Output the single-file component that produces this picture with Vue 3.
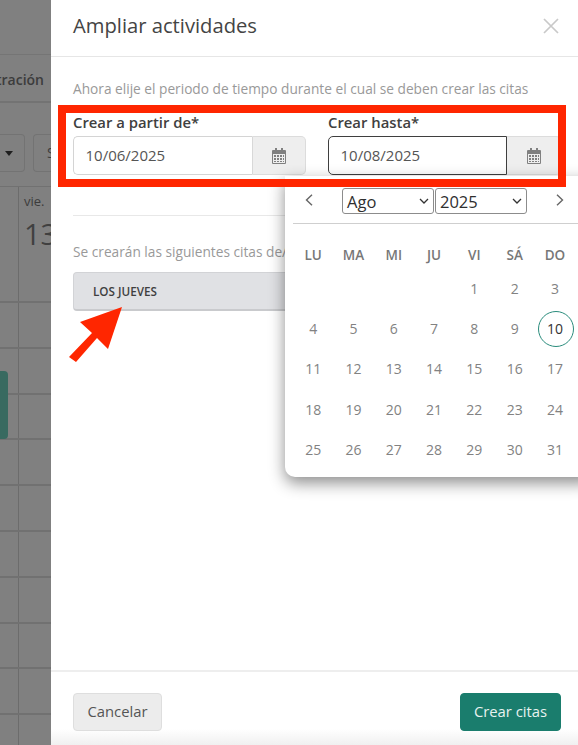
<script setup>
const heads = ['LU', 'MA', 'MI', 'JU', 'VI', 'SÁ', 'DO']
const blanks = [1, 2, 3, 4]
const days = Array.from({ length: 31 }, (_, i) => i + 1)
const rows = Array.from({ length: 10 }, (_, i) => i)
const calPath = 'M3 0h2v2h4V0h2v2h2a1 1 0 0 1 1 1v12a1 1 0 0 1-1 1H1a1 1 0 0 1-1-1V3a1 1 0 0 1 1-1h2zM1 6v9h12V6zm1 1h2v2H2zm3 0h2v2H5zm3 0h2v2H8zm3 0h1v2h-1zM2 10h2v2H2zm3 0h2v2H5zm3 0h2v2H8zm3 0h1v2h-1zM2 13h2v1H2zm3 0h2v1H5zm3 0h2v1H8zm3 0h1v1h-1z'
</script>

<template>
  <div class="screen">
    <aside class="backdrop">
      <div class="top-strip"></div>
      <div class="tab-row"><span class="tab-text">tración</span></div>
      <div class="tool-row">
        <span class="drop"><i class="caret"></i></span>
        <span class="view">S</span>
      </div>
      <div class="day-head">
        <div class="hcol"></div>
        <div class="day-col">
          <span class="dow">vie.</span>
          <span class="dnum">13</span>
        </div>
      </div>
      <div class="cells">
        <div v-for="n in rows" :key="n" class="cell"><div class="hcol"></div></div>
        <div class="event"></div>
      </div>
    </aside>

    <main class="panel">
      <header class="head">
        <h1>Ampliar actividades</h1>
        <svg class="close" viewBox="0 0 16 16" width="16" height="16">
          <path d="M1 1l14 14M15 1L1 15" fill="none" stroke="#c9c9c9" stroke-width="1.7" />
        </svg>
      </header>

      <section class="body">
        <p class="lead">Ahora elije el periodo de tiempo durante el cual se deben crear las citas</p>

        <div class="fields">
          <div class="field">
            <label>Crear a partir de*</label>
            <div class="input-group">
              <div class="input">10/06/2025</div>
              <div class="addon">
                <svg viewBox="0 0 14 16" width="14" height="16"><path fill="#808080" :d="calPath" /></svg>
              </div>
            </div>
          </div>
          <div class="field">
            <label>Crear hasta*</label>
            <div class="input-group">
              <div class="input focus">10/08/2025</div>
              <div class="addon">
                <svg viewBox="0 0 14 16" width="14" height="16"><path fill="#808080" :d="calPath" /></svg>
              </div>
            </div>
          </div>
        </div>

        <hr class="divider" />

        <p class="lead created">Se crearán las siguientes citas de/a</p>
        <div class="pill">LOS JUEVES</div>
      </section>

      <footer class="foot">
        <button class="btn cancel">Cancelar</button>
        <button class="btn create">Crear citas</button>
      </footer>
    </main>

    <div class="picker">
      <div class="picker-nav">
        <svg class="chev" viewBox="0 0 8 12" width="8" height="12"><path d="M7 .8L1.5 6 7 11.2" fill="none" stroke="#666" stroke-width="1.4" /></svg>
        <div class="selects">
          <span class="sel month">Ago<svg viewBox="0 0 10 6" width="10" height="6"><path d="M1 1l4 4 4-4" fill="none" stroke="#333" stroke-width="1.3" /></svg></span>
          <span class="sel year">2025<svg viewBox="0 0 10 6" width="10" height="6"><path d="M1 1l4 4 4-4" fill="none" stroke="#333" stroke-width="1.3" /></svg></span>
        </div>
        <svg class="chev" viewBox="0 0 8 12" width="8" height="12"><path d="M1 .8L6.5 6 1 11.2" fill="none" stroke="#666" stroke-width="1.4" /></svg>
      </div>
      <div class="cal">
        <span v-for="h in heads" :key="h" class="dh">{{ h }}</span>
        <span v-for="b in blanks" :key="'b' + b" class="d"></span>
        <span v-for="d in days" :key="d" class="d" :class="{ today: d === 10 }">{{ d }}</span>
      </div>
    </div>

    <div class="red-frame"></div>

    <svg class="arrow" viewBox="0 0 578 745" width="578" height="745">
      <path fill="#ff2600" d="M122 307L108 349 97 338 76 362 69 357 92 333 80 322z" />
    </svg>
  </div>
</template>

<style>
html, body { margin: 0; padding: 0; background: #fff; }
</style>

<style scoped>
* { box-sizing: border-box; }
.screen {
  width: 578px; height: 745px; display: flex; overflow: hidden; position: relative;
  font-family: "Open Sans", "Noto Sans", sans-serif;
}

.backdrop { width: 51px; flex: none; background: #808080; display: flex; flex-direction: column; color: #3c3c3c; overflow: hidden; }
.top-strip { height: 55px; flex: none; border-bottom: 1px solid #757575; }
.tab-row { height: 48px; flex: none; border-bottom: 2px solid #737373; white-space: nowrap; overflow: hidden; }
.tab-text { display: block; margin-left: -4px; font-size: 14px; font-weight: 600; line-height: 49px; }
.tool-row { height: 84px; flex: none; display: flex; gap: 8px; padding-top: 31px; border-bottom: 1px solid #717171; }
.drop { width: 25px; height: 38px; flex: none; border: 1px solid #737373; border-left: 0; border-radius: 0 4px 4px 0; display: flex; align-items: center; justify-content: flex-start; padding-left: 5px; }
.caret { border-left: 4.5px solid transparent; border-right: 4.5px solid transparent; border-top: 5px solid #1f1f1f; }
.view { width: 30px; height: 38px; flex: none; border: 1px solid #737373; border-right: 0; border-radius: 4px 0 0 4px; padding-left: 13px; font-size: 14px; line-height: 36px; }
.day-head { height: 116px; flex: none; display: flex; border-bottom: 2px solid #717171; }
.hcol { width: 19px; height: 100%; flex: none; border-right: 1px solid #6c6c6c; }
.day-col { flex: 1; padding: 5px 0 0 5px; white-space: nowrap; }
.dow { display: block; font-size: 13px; line-height: 18px; }
.dnum { display: block; font-size: 29px; line-height: 40px; margin-top: 4px; color: #404040; }
.cells { position: relative; flex: 1; }
.cell { height: 45.8px; border-bottom: 2px solid #717171; }
.event { position: absolute; left: -4px; top: 68px; width: 12px; height: 68px; background: #386a60; border-radius: 4px; }

.panel { flex: 1; min-width: 0; background: #fff; display: flex; flex-direction: column; position: relative; }
.head { height: 57px; flex: none; border-bottom: 1px solid #e6e6e6; display: flex; align-items: center; justify-content: space-between; padding: 0 19px 4px 22px; }
h1 { margin: -2px 0 0; font-size: 20.2px; font-weight: 400; color: #444; line-height: 26px; }
.body { flex: 1; padding: 22px 22px 0; min-height: 0; }
.lead { margin: 0; font-size: 13.7px; line-height: 20px; color: #999; white-space: nowrap; }
.fields { display: flex; gap: 22px; margin-top: 13px; width: 488px; }
.field { width: 233px; flex: none; }
label { display: block; font-size: 14.85px; font-weight: 600; line-height: 20px; margin-bottom: 4px; color: #404040; }
.input-group { display: flex; height: 39px; }
.input { flex: 1; border: 1px solid #d4d4d4; border-right: 0; border-radius: 5px 0 0 5px; padding-left: 11.5px; font-size: 15px; line-height: 37px; color: #555; background: #fff; }
.input.focus { border: 1px solid #3f3f3f; }
.addon { width: 54px; flex: none; border: 1px solid #dcdcdc; border-left: 1px solid #d8d8d8; border-radius: 0 5px 5px 0; background: #eeeeee; display: flex; align-items: center; justify-content: center; }
.input.focus + .addon { border-left: 0; width: 54px; }
.divider { margin: 40px 0 0; border: 0; border-top: 1px solid #e8e8e8; width: 484px; }
.created { margin-top: 26px; }
.pill { margin-top: 10px; height: 39px; width: 484px; background: #e0e1e4; border: 1px solid #d2d3d6; border-bottom: 2px solid #c9cacd; border-radius: 4px; padding-left: 19px; font-size: 11.7px; font-weight: 600; line-height: 36px; color: #3f3f3f; }
.foot { height: 75px; flex: none; border-top: 2px solid #eeeeee; display: flex; justify-content: space-between; align-items: flex-start; padding: 21px 17px 0 22px; background: linear-gradient(to bottom, #fff 0, #fff 78%, #f0f0f0 100%); }
.btn { height: 38px; border-radius: 4px; font-family: inherit; font-size: 14.8px; padding: 0 0 2px; }
.cancel { width: 89px; background: #ececec; border: 1px solid #dedede; color: #555; }
.create { width: 101px; background: #1a7d6d; border: 1px solid #1a7d6d; color: #e8f2f0; }

.picker { position: absolute; left: 285px; top: 176px; width: 310px; height: 301px; background: #fff; border-radius: 0 0 10px 10px; box-shadow: 0 6px 16px rgba(0, 0, 0, .45); }
.picker-nav { height: 48px; margin-left: 8px; border-bottom: 1px solid #cfcfcf; padding-top: 12px; width: 302px; display: flex; align-items: flex-start; }
.chev { flex: none; margin: 6px 0 0 12px; }
.selects { display: flex; gap: 1px; margin-left: 29px; margin-right: 29px; }
.chev:last-child { margin-left: 0; }
.sel { width: 92px; height: 26px; border: 1px solid #8c8c8c; border-radius: 3px; display: flex; align-items: center; justify-content: space-between; padding: 0 4px; font-size: 16.5px; color: #2f2f2f; background: #fff; }
.cal { display: grid; grid-template-columns: repeat(7, 40.3px); grid-template-rows: 33px; grid-auto-rows: 40.3px; margin: 11px 0 0 8px; }
.dh, .d { display: flex; align-items: center; justify-content: center; font-size: 14px; color: #828282; }
.dh { font-weight: 600; color: #777; font-size: 13.5px; padding-top: 7px; }
.d.today { color: #333; position: relative; }
.d.today::before { content: ""; position: absolute; left: 3px; top: 3px; width: 34px; height: 34px; border: 1.3px solid #2a8c7c; border-radius: 50%; }

.red-frame { position: absolute; left: 58px; top: 105px; width: 508px; height: 82px; border: 8px solid #ff2600; pointer-events: none; }
.arrow { position: absolute; left: 0; top: 0; pointer-events: none; }
</style>
